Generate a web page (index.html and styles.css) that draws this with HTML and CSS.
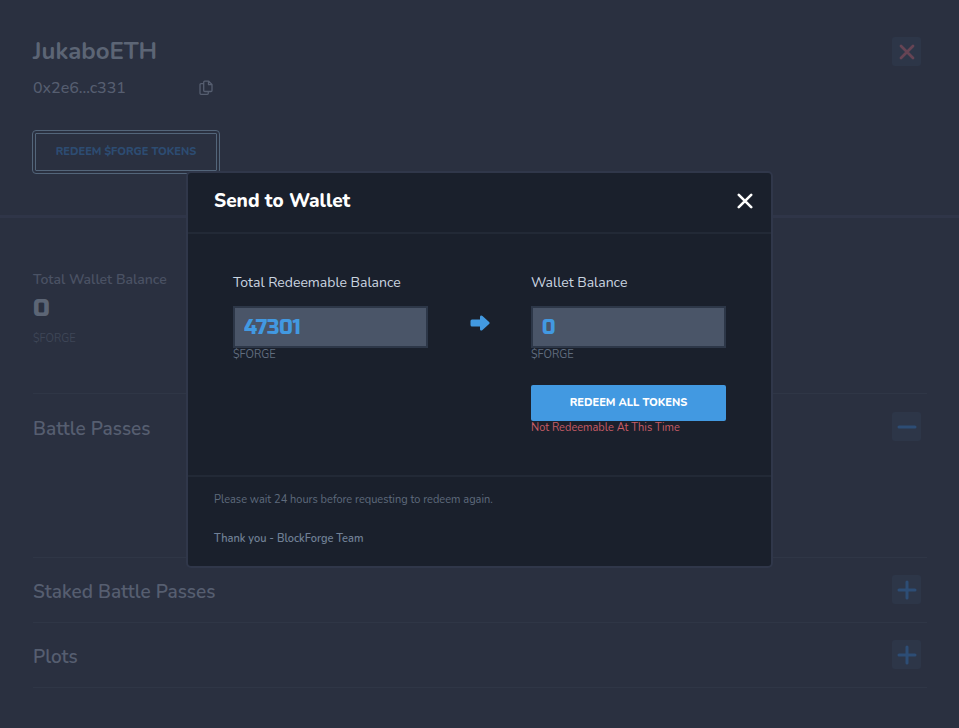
FILE: index.html
```html
<!DOCTYPE html>
<html lang="en">
<head>
<meta charset="utf-8">
<meta name="viewport" content="width=device-width, initial-scale=1">
<title>JukaboETH</title>
<link rel="stylesheet" href="styles.css">
</head>
<body>
<main class="page">
  <header class="profile">
    <div>
      <h1 class="profile-name">JukaboETH</h1>
      <div class="address">
        <span>0x2e6...c331</span>
        <button class="copy" type="button" aria-label="Copy address">
          <svg width="14" height="16" viewBox="0 0 14 16" fill="none" stroke="currentColor" stroke-width="1.3" stroke-linejoin="round"><path d="M5.7 1.2h4L13 4.5v6a1 1 0 0 1-1 1H5.7a1 1 0 0 1-1-1v-8.300a1 1 0 0 1 1-1zM9.500 1.300v3.400H13M4.700 3.700H2a1 1 0 0 0-1 1v8.600a1 1 0 0 0 1 1h6.300a1 1 0 0 0 1-1v-1.700"/></svg>
        </button>
      </div>
      <button class="redeem" type="button">REDEEM $FORGE TOKENS</button>
    </div>
    <button class="square close-profile" type="button" aria-label="Close profile">
      <svg width="16" height="16" viewBox="0 0 16 16" stroke="currentColor" stroke-width="2.800" stroke-linecap="round"><path d="M2 2l12 12M14 2L2 14"/></svg>
    </button>
  </header>
  <section class="details">
    <div class="wallet">
      <p class="wallet-label">Total Wallet Balance</p>
      <p class="wallet-value">0</p>
      <p class="wallet-unit">$FORGE</p>
    </div>
    <section class="group open">
      <h2>Battle Passes</h2>
      <button class="square" type="button" aria-label="Collapse Battle Passes">
        <svg width="20" height="20" viewBox="0 0 20 20" stroke="currentColor" stroke-width="3" stroke-linecap="round"><path d="M2 10h16"/></svg>
      </button>
    </section>
    <section class="group">
      <h2>Staked Battle Passes</h2>
      <button class="square" type="button" aria-label="Expand Staked Battle Passes">
        <svg width="20" height="20" viewBox="0 0 20 20" stroke="currentColor" stroke-width="3" stroke-linecap="round"><path d="M2 10h16M10 2v16"/></svg>
      </button>
    </section>
    <section class="group">
      <h2>Plots</h2>
      <button class="square" type="button" aria-label="Expand Plots">
        <svg width="20" height="20" viewBox="0 0 20 20" stroke="currentColor" stroke-width="3" stroke-linecap="round"><path d="M2 10h16M10 2v16"/></svg>
      </button>
    </section>
  </section>
</main>
<div class="overlay">
  <div class="modal" role="dialog" aria-modal="true" aria-labelledby="modal-title">
    <header class="modal-header">
      <h2 id="modal-title">Send to Wallet</h2>
      <button class="modal-close" type="button" aria-label="Close">
        <svg width="16" height="16" viewBox="0 0 16 16" stroke="currentColor" stroke-width="2.600" stroke-linecap="round"><path d="M1.800 1.800l12.400 12.400M14.200 1.800L1.800 14.200"/></svg>
      </button>
    </header>
    <form class="modal-body">
      <div class="field">
        <label for="redeemable">Total Redeemable Balance</label>
        <input id="redeemable" type="text" value="47301" readonly>
        <span class="unit">$FORGE</span>
      </div>
      <svg class="arrow" width="20" height="16" viewBox="0 0 20 16" fill="currentColor"><path d="M2 4.500h8V2c0-1.600 1.400-2.100 2.500-1.100l6.600 6c.7.600.7 1.600 0 2.200l-6.600 6C11.400 16.100 10 15.600 10 14v-2.500H2a1.500 1.500 0 0 1-1.500-1.500V6A1.500 1.500 0 0 1 2 4.500z"/></svg>
      <div class="field">
        <label for="balance">Wallet Balance</label>
        <input id="balance" type="text" value="0" readonly>
        <span class="unit">$FORGE</span>
        <button class="redeem-all" type="button">REDEEM ALL TOKENS</button>
        <span class="error">Not Redeemable At This Time</span>
      </div>
    </form>
    <footer class="modal-footer">
      <p>Please wait 24 hours before requesting to redeem again.</p>
      <p class="thanks">Thank you - BlockForge Team</p>
    </footer>
  </div>
</div>
</body>
</html>
```
FILE: styles.css
```css
* {
  box-sizing: border-box;
}

body {
  margin: 0;
  min-height: 100vh;
  background: #2a3040;
  color: #565e70;
  font-family: Nunito, Lato, sans-serif;
}

h1, h2, p {
  margin: 0;
}

button, input {
  font-family: inherit;
}

button {
  display: flex;
  align-items: center;
  justify-content: center;
  padding: 0;
  border: 0;
  background: none;
  color: inherit;
}

.profile {
  display: flex;
  justify-content: space-between;
  align-items: flex-start;
  padding: 35px 38px 41px 32px;
  border-bottom: 3px solid #2f3548;
}

.profile-name {
  padding-left: 1px;
  font-size: 24px;
  line-height: 32px;
  color: #5c6575;
}

.address {
  display: flex;
  justify-content: space-between;
  align-items: center;
  width: 181px;
  margin-top: 9px;
  padding-left: 1px;
  font-size: 16px;
  font-weight: 500;
  line-height: 24px;
}

.redeem {
  width: 188px;
  height: 44px;
  margin-top: 30px;
  padding-bottom: 2px;
  border: 4px double #53657a;
  border-radius: 4px;
  color: #2d4c72;
  font-size: 11px;
  font-weight: 800;
}

.square {
  width: 29px;
  height: 29px;
  border-radius: 3px;
  background: #2d3648;
  color: #2d4d75;
}

.close-profile {
  margin-top: 2px;
  color: #664454;
}

.details {
  padding: 50px 32px 0 33px;
}

.wallet {
  height: 125px;
}

.wallet-label {
  font-size: 14px;
  font-weight: 600;
  line-height: 24px;
  color: #4a5264;
}

.wallet-value {
  font-family: "Russo One", Roboto, sans-serif;
  font-size: 25px;
  font-weight: 400;
  line-height: 32px;
  color: #5c6575;
}

.wallet-unit {
  margin-top: 5px;
  font-size: 11px;
  line-height: 20px;
  color: #3e4657;
}

.group {
  display: flex;
  justify-content: space-between;
  align-items: flex-start;
  height: 65px;
  padding: 17px 6px 0 0;
  border-top: 1px solid #2f3646;
}

.group.open {
  height: 164px;
  padding-top: 18px;
}

.group:last-child {
  height: 66px;
  border-bottom: 1px solid #2f3646;
}

.group h2 {
  font-size: 19px;
  font-weight: 600;
  line-height: 34px;
}

.overlay {
  position: fixed;
  inset: 0;
  padding: 171px 16px 16px;
  overflow: auto;
}

.modal {
  max-width: 587px;
  margin: 0 auto;
  border: 2px solid #30374a;
  border-radius: 5px;
  background: #1a202c;
}

.modal-header {
  display: flex;
  justify-content: space-between;
  align-items: center;
  height: 61px;
  padding: 0 18px 3px 26px;
  border-bottom: 2px solid #222936;
  color: #fff;
}

.modal-header h2 {
  font-size: 19px;
  font-weight: 800;
  line-height: 28px;
}

.modal-body {
  display: flex;
  justify-content: space-between;
  padding: 37px 45px 40px;
}

.field {
  display: flex;
  flex-direction: column;
  width: 195px;
}

.field label {
  margin-bottom: 11px;
  font-size: 14px;
  line-height: 24px;
  color: #cbd5e0;
}

.field input {
  width: 100%;
  height: 42px;
  padding: 0 9px;
  border: 2px solid #2d3748;
  border-radius: 0;
  outline: 0;
  background: #4a5568;
  color: #4299e1;
  font-family: "Russo One", Roboto, sans-serif;
  font-size: 20px;
  font-weight: 400;
}

.unit, .error {
  font-size: 11px;
  line-height: 14px;
}

.unit {
  color: #616d7f;
}

.arrow {
  margin-top: 44px;
  color: #4299e1;
}

.redeem-all {
  height: 36px;
  margin-top: 23px;
  padding-bottom: 2px;
  border-radius: 2px;
  background: #4299e1;
  color: #fff;
  font-size: 11px;
  font-weight: 800;
}

.error {
  color: #c75c66;
}

.modal-footer {
  padding: 13px 26px 17px;
  border-top: 2px solid #222936;
  font-size: 11px;
  line-height: 20px;
  color: #5f6b7d;
}

.thanks {
  margin-top: 19px;
  font-weight: 600;
  color: #718096;
}
```
